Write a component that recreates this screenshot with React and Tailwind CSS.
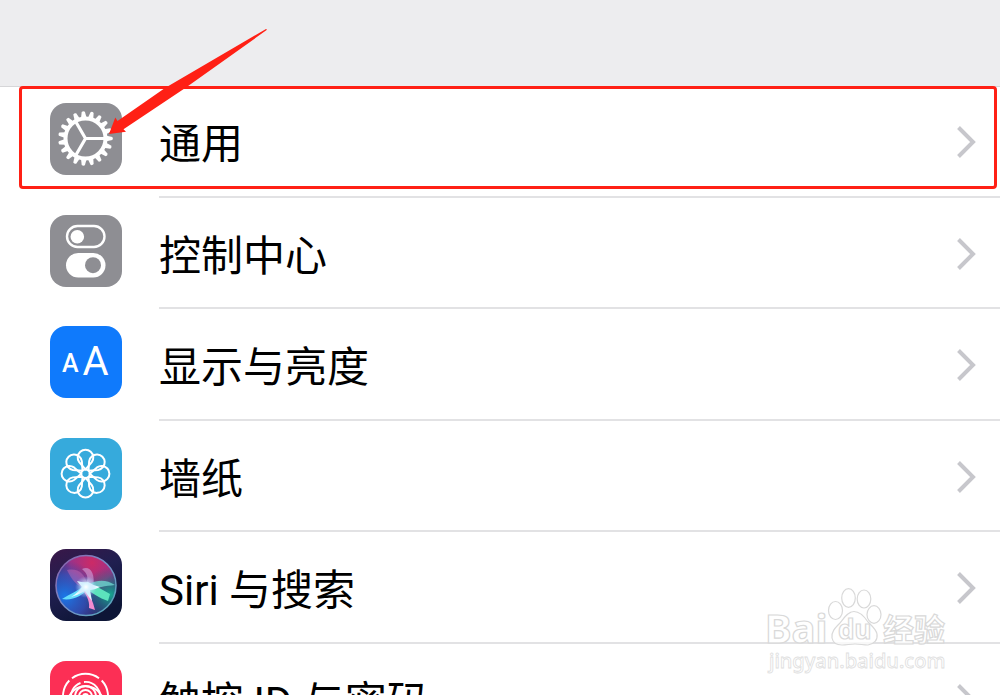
import React from "react";

const tile = "block size-[72px] shrink-0";

function Tile({ fill, children }) {
  return (
    <svg className={tile} viewBox="0 0 72 72" fill="none" aria-hidden="true">
      <rect width="72" height="72" rx="16" fill={fill} />
      {children}
    </svg>
  );
}

function GearIcon() {
  const teeth = Array.from({ length: 19 }, (_, i) => (i * 360) / 19);
  return (
    <Tile fill="#8e8e93">
      <g transform="translate(35.5 35.5)" stroke="#fff">
        {teeth.map((a) => (
          <path key={a} d="M20 -2.9 L26.8 -1.6 Q28 0 26.8 1.6 L20 2.9Z" fill="#fff" stroke="none" transform={`rotate(${a})`} />
        ))}
        <circle r="20" strokeWidth="4" />
        <path d="M0 0H20M0 0L-10 -17.3M0 0L-10 17.3" strokeWidth="3.2" />
      </g>
    </Tile>
  );
}

function ControlIcon() {
  return (
    <Tile fill="#8e8e93">
      <rect x="17" y="11" width="37.5" height="21" rx="10.5" stroke="#fff" strokeWidth="2.4" />
      <circle cx="27.3" cy="21.7" r="6.8" fill="#fff" />
      <rect x="16" y="38" width="39.5" height="24.5" rx="12.2" fill="#fff" />
      <circle cx="43" cy="50.2" r="8" fill="#8e8e93" />
    </Tile>
  );
}

function DisplayIcon() {
  return (
    <Tile fill="#0f7afc">
      <g fill="#fff" fontFamily="Roboto, sans-serif">
        <text x="12" y="45.5" fontSize="25" fontWeight="500">A</text>
        <text x="32.5" y="48.7" fontSize="40">A</text>
      </g>
    </Tile>
  );
}

function WallpaperIcon() {
  return (
    <Tile fill="#36aadc">
      <g transform="translate(35.5 35.7)" stroke="#fff" strokeWidth="2" strokeLinejoin="round">
        {[0, 45, 90, 135, 180, 225, 270, 315].map((a) => (
          <path key={a} d="M0 -4.2L-6.3 -11.5A7.8 7.8 0 1 1 6.3 -11.5Z" transform={`rotate(${a})`} />
        ))}
        <circle r="4.2" />
      </g>
    </Tile>
  );
}

function SiriIcon() {
  return (
    <svg className={tile} viewBox="0 0 72 72" fill="none" aria-hidden="true">
      <defs>
        <linearGradient id="siriBack" x1="0" y1="0" x2="0.5" y2="1">
          <stop offset="0" stopColor="#3a1748" />
          <stop offset="0.5" stopColor="#201f50" />
          <stop offset="1" stopColor="#0d1536" />
        </linearGradient>
        <radialGradient id="siriPink" cx="0.6" cy="0.12" r="0.65">
          <stop offset="0" stopColor="#cc2a66" />
          <stop offset="0.55" stopColor="#a9328a" stopOpacity="0.9" />
          <stop offset="1" stopColor="#6b3494" stopOpacity="0" />
        </radialGradient>
        <radialGradient id="siriBlue" cx="0.15" cy="0.68" r="0.6">
          <stop offset="0" stopColor="#1b78e8" />
          <stop offset="0.6" stopColor="#3055c0" stopOpacity="0.7" />
          <stop offset="1" stopColor="#3a3f9a" stopOpacity="0" />
        </radialGradient>
        <radialGradient id="siriTeal" cx="0.9" cy="0.65" r="0.45">
          <stop offset="0" stopColor="#18a890" />
          <stop offset="1" stopColor="#136070" stopOpacity="0" />
        </radialGradient>
        <radialGradient id="siriGlow">
          <stop offset="0" stopColor="#fff" />
          <stop offset="0.3" stopColor="#d9f4ff" stopOpacity="0.9" />
          <stop offset="1" stopColor="#9ccfff" stopOpacity="0" />
        </radialGradient>
        <linearGradient id="siriRim" x1="0" y1="0" x2="1" y2="1">
          <stop offset="0" stopColor="#8c5ba8" />
          <stop offset="0.5" stopColor="#7790c8" />
          <stop offset="1" stopColor="#4faab8" />
        </linearGradient>
      </defs>
      <rect width="72" height="72" rx="16" fill="url(#siriBack)" />
      <circle cx="36" cy="36.5" r="30" fill="#313077" />
      <circle cx="36" cy="36.5" r="30" fill="url(#siriPink)" />
      <circle cx="36" cy="36.5" r="30" fill="url(#siriBlue)" />
      <circle cx="36" cy="36.5" r="30" fill="url(#siriTeal)" />
      <path d="M17 21C28 19 35 24 38 38C29 40 22 32 17 21Z" fill="#db72ba" opacity="0.4" />
      <path d="M32 20C39 16 46 23 43 38L35 36C39 30 38 25 32 20Z" fill="#d2a4dc" opacity="0.6" />
      <path d="M39 35C49 30 57 31 65 36C55 37 47 38 40 42Z" fill="#6dd5ce" opacity="0.8" />
      <path d="M37 36C46 36 53 41 60 45L58 52C49 49 42 44 35 39Z" fill="#5ce3bc" />
      <path d="M33 37C28 42 20 45 12 50C23 52 33 46 38 40Z" fill="#64dcfb" />
      <path d="M36 37C39 45 43 52 45 61L39 59C40 51 35 44 32 40Z" fill="#f18bd0" />
      <path d="M27 32Q34 34 38 33Q44 37 50 38Q44 41 40 41Q41 47 42 52Q38 47 35 42Q28 46 21 48Q29 43 32 38Z" fill="#e8faff" />
      <circle cx="36" cy="38" r="11" fill="url(#siriGlow)" />
      <circle cx="36" cy="36.5" r="30" stroke="url(#siriRim)" strokeWidth="1.5" />
    </svg>
  );
}

function TouchIcon() {
  return (
    <Tile fill="#fc2f55">
      <g transform="translate(35.5 35.5)" stroke="#fff" strokeWidth="1.9">
        <path d="M-13.5 -18.2A22.6 22.6 0 0 1 13.5 -18.2" />
        <path d="M-16.2 -16A22.6 22.6 0 0 0 -20 10M16.2 -16A22.6 22.6 0 0 1 20 10" />
        <path d="M-18 4A18.5 18.5 0 0 1 18 4" />
        <path d="M-14 4A14.5 14.5 0 0 1 -5 -13.5M-1.5 -14.5A14.5 14.5 0 0 1 14 4" />
        <circle r="10.5" />
        <circle r="6.5" />
        <circle r="2.5" />
      </g>
    </Tile>
  );
}

const rows = [
  { label: "通用", Icon: GearIcon },
  { label: "控制中心", Icon: ControlIcon },
  { label: "显示与亮度", Icon: DisplayIcon },
  { label: "墙纸", Icon: WallpaperIcon },
  { label: "Siri 与搜索", Icon: SiriIcon },
  { label: "触控 ID 与密码", Icon: TouchIcon },
];

function Row({ label, Icon, marked }) {
  return (
    <li className="relative odd:h-28 even:h-[111px]">
      <a href="#" className="flex h-full items-center pl-[50px]">
        <span className="pb-1.5">
          <Icon />
        </span>
        <span className="ml-[37px] flex h-full flex-1 items-center justify-between border-b-2 border-[#e2e2e4] pt-0.5 pr-6">
          <span className="pt-1.5 text-[42px] leading-[60px]">{label}</span>
          <svg className="h-8 w-5" viewBox="0 0 20 32" fill="none" stroke="#c7c7cc" strokeWidth="4" aria-hidden="true">
            <path d="M2.5 1.5L17 16L2.5 30.5" />
          </svg>
        </span>
      </a>
      {marked && (
        <>
          <div className="pointer-events-none absolute top-0 right-[3px] bottom-[9px] left-[19px] rounded border-3 border-[#ff2015]" />
          <svg className="pointer-events-none absolute -top-[57px] left-[108px] h-[106px] w-40" viewBox="108 29 160 106" aria-hidden="true">
            <path d="M267 29.8L186 87.5L123.5 129.2L126 131.8L109 134L115.3 117.5L117.5 121L165 88L266 29Z" fill="#ff2015" />
          </svg>
        </>
      )}
    </li>
  );
}

function Watermark() {
  return (
    <svg className="absolute top-[584px] right-12 h-[92px] w-[188px]" viewBox="764 584 188 92" aria-label="Baidu 经验">
      <g fill="#fff" fillOpacity="0.75" stroke="#d9d9d9" strokeWidth="1.2">
        <ellipse cx="835.5" cy="610.5" rx="7" ry="9" />
        <ellipse cx="848.5" cy="598" rx="6.8" ry="9.3" />
        <ellipse cx="864" cy="599" rx="6.8" ry="9" />
        <ellipse cx="874" cy="614.5" rx="7" ry="8.8" />
        <path d="M854 611.5C848 611.5 844 618 840 623C835 628 831 632 832 638C833 643 837 645 842 645C847 645 850 644 855 644C860 644 863 645 868 645C874 644 878 640 877 634C876 629 872 626 868 622C864 616 860 611.5 854 611.5Z" />
        <g fontFamily="'Noto Sans', 'Noto Sans CJK SC', sans-serif" fontWeight="700">
          <text x="765" y="643" fontSize="40">Bai</text>
          <text x="838" y="639" fontSize="26">du</text>
          <text x="883" y="641" fontSize="31">经验</text>
          <text x="769" y="668" fontSize="20" fontWeight="500" strokeWidth="0.8" stroke="#dedede">jingyan.baidu.com</text>
        </g>
      </g>
    </svg>
  );
}

export default function App() {
  return (
    <main className="relative h-screen overflow-hidden bg-white font-['Roboto','Noto_Sans_CJK_SC',sans-serif] text-black">
      <header className="h-[86px] bg-[#ededef] shadow-[0_1px_0_#d6d6d8]" />
      <ul lang="zh-CN">
        {rows.map((row, i) => (
          <Row key={row.label} {...row} marked={i === 0} />
        ))}
      </ul>
      <Watermark />
    </main>
  );
}
